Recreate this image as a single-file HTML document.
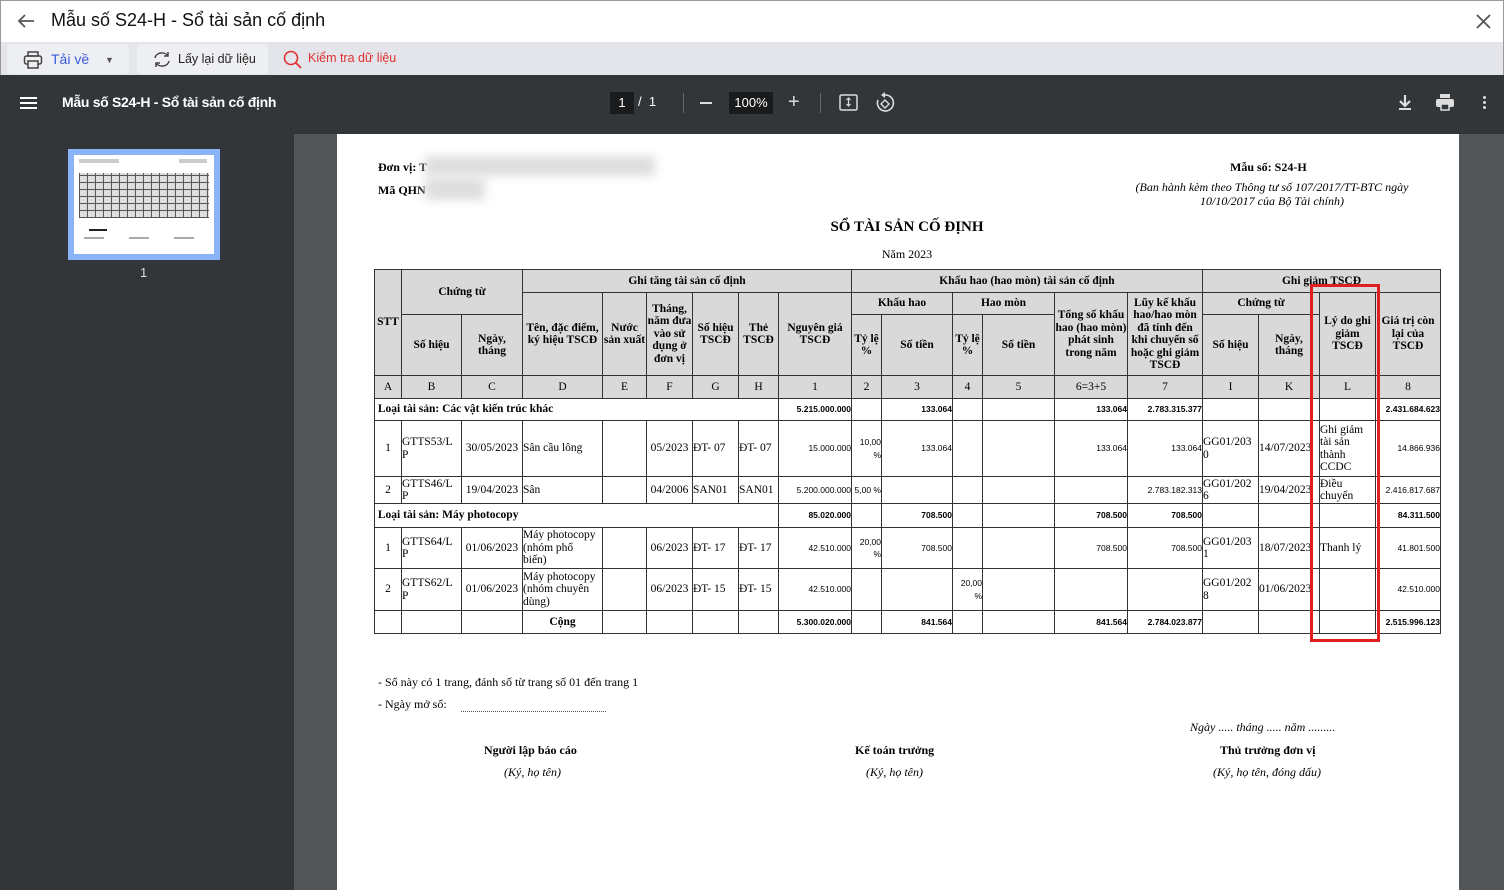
<!DOCTYPE html>
<html><head><meta charset="utf-8"><style>
*{margin:0;padding:0;box-sizing:border-box}
body{width:1504px;height:890px;overflow:hidden;font-family:"Liberation Sans",sans-serif;background:#525659;position:relative}
.hdr{position:absolute;left:0;top:0;width:1504px;height:42px;background:#fff;border:1px solid #999;border-bottom:none}
.hdr .t{position:absolute;left:50px;top:9px;font-size:18px;color:#111}
.tb{position:absolute;left:0;top:42px;width:1504px;height:33px;background:#e4e5ea;border-left:1px solid #999;border-right:1px solid #999}
.btn{position:absolute;top:2px;height:30px;background:#eeeff2;border-radius:3px;font-size:13px;line-height:30px}
.pv{position:absolute;left:0;top:75px;width:1504px;height:59px;background:#323639;color:#fff}
.side{position:absolute;left:0;top:134px;width:294px;height:756px;background:#323639}
.page{position:absolute;left:337px;top:134px;width:1122px;height:756px;background:#fff;font-family:"Liberation Serif",serif;color:#000}
table{position:absolute;left:37px;top:135px;border-collapse:collapse;table-layout:fixed;font-size:11.5px}
td{border:1px solid #333;text-align:center;vertical-align:middle;line-height:12.5px;padding:0;overflow:hidden;word-break:break-all}
.h td{background:#d9d9d9;font-weight:bold;word-break:normal}
.n{font-family:"Liberation Sans",sans-serif;font-size:8.5px;text-align:right;word-break:normal}
.b{font-weight:bold}
.l{text-align:left}
.dt td{border-top:1px dotted #555}
</style></head><body>
<div class="hdr">
<svg style="position:absolute;left:16px;top:12px" width="18" height="16" viewBox="0 0 18 16"><path d="M17 8H2M8 2L2 8l6 6" stroke="#555" stroke-width="1.8" fill="none"/></svg>
<div class="t">Mẫu số S24-H - Sổ tài sản cố định</div>
<svg style="position:absolute;left:1474px;top:12px" width="17" height="17"><path d="M2 2l13 13M15 2L2 15" stroke="#555" stroke-width="1.8"/></svg>
</div>
<div class="tb">
<div class="btn" style="left:6px;width:122px">
<svg style="position:absolute;left:16px;top:7px" width="20" height="18" viewBox="0 0 20 18"><rect x="5" y="1" width="10" height="4" fill="none" stroke="#444" stroke-width="1.5"/><rect x="1.5" y="5" width="17" height="8" rx="2" fill="none" stroke="#444" stroke-width="1.5"/><rect x="5" y="10" width="10" height="7" fill="#eee" stroke="#444" stroke-width="1.5"/></svg>
<span style="position:absolute;left:44px;color:#3b5bdb;font-size:14px">Tải về</span>
<span style="position:absolute;left:98px;top:1px;color:#555;font-size:9px">▼</span></div>
<div class="btn" style="left:136px;width:131px">
<svg style="position:absolute;left:15px;top:7px" width="20" height="17" viewBox="0 0 20 17"><path d="M3 7a7 6 0 0 1 13-2M17 10a7 6 0 0 1-13 2" stroke="#444" stroke-width="1.5" fill="none"/><path d="M16 1v4h-4M4 16v-4h4" stroke="#444" stroke-width="1.5" fill="none"/></svg>
<span style="position:absolute;left:41px;color:#222;font-size:12.5px">Lấy lại dữ liệu</span></div>
<svg style="position:absolute;left:282px;top:8px" width="19" height="19"><circle cx="8" cy="8" r="6.5" stroke="#e03131" stroke-width="1.6" fill="none"/><path d="M13 13l5 5" stroke="#e03131" stroke-width="1.8"/></svg>
<span style="position:absolute;left:307px;top:9px;color:#e03131;font-size:12.5px">Kiểm tra dữ liệu</span>
</div>
<div class="pv">
<div style="position:absolute;left:20px;top:22px;width:17px;height:2px;background:#fff;box-shadow:0 5px #fff,0 10px #fff"></div>
<div style="position:absolute;left:62px;top:19px;font-size:14px;font-weight:bold;letter-spacing:-0.3px">Mẫu số S24-H - Sổ tài sản cố định</div>
<div style="position:absolute;left:610px;top:17px;width:24px;height:22px;background:#191b1c;font-size:13px;text-align:center;line-height:22px">1</div>
<div style="position:absolute;left:638px;top:19px;font-size:13px">/ &nbsp;1</div>
<div style="position:absolute;left:683px;top:18px;width:1px;height:20px;background:#666"></div>
<div style="position:absolute;left:700px;top:27px;width:12px;height:2px;background:#ddd"></div>
<div style="position:absolute;left:729px;top:17px;width:44px;height:22px;background:#191b1c;font-size:13px;text-align:center;line-height:22px">100%</div>
<div style="position:absolute;left:788px;top:16px;font-size:20px;color:#ddd">+</div>
<div style="position:absolute;left:820px;top:18px;width:1px;height:20px;background:#666"></div>
<svg style="position:absolute;left:839px;top:19px" width="20" height="18"><rect x="1" y="1" width="17" height="15" rx="1.5" fill="none" stroke="#ddd" stroke-width="1.5"/><path d="M9.5 4v8M7.5 6l2-2 2 2M7.5 10l2 2 2-2" stroke="#ddd" stroke-width="1.2" fill="none"/></svg>
<svg style="position:absolute;left:875px;top:17px" width="20" height="22"><path d="M10 3a8 8 0 1 1-7 5" stroke="#ddd" stroke-width="1.6" fill="none"/><path d="M10 0v6l-4-3z" fill="#ddd"/><path d="M10 8l4 4-4 4-4-4z" fill="none" stroke="#ddd" stroke-width="1.4"/></svg>
<svg style="position:absolute;left:1397px;top:19px" width="16" height="18"><path d="M8 1v10M3 7l5 5 5-5" stroke="#ddd" stroke-width="2.2" fill="none"/><rect x="2" y="14" width="12" height="2" fill="#ddd"/></svg>
<svg style="position:absolute;left:1436px;top:19px" width="18" height="17"><rect x="4" y="0" width="10" height="4" fill="#ddd"/><rect x="0" y="5" width="18" height="8" rx="2" fill="#ddd"/><rect x="5" y="10" width="8" height="6" fill="#323639" stroke="#ddd" stroke-width="1.5"/></svg>
<div style="position:absolute;left:1483px;top:21px;width:3px;height:3px;background:#ddd;border-radius:2px;box-shadow:0 5px #ddd,0 10px #ddd"></div>
</div>
<div class="side">
<div style="position:absolute;left:68px;top:15px;width:152px;height:111px;background:#8ab4f8"></div>
<div style="position:absolute;left:74px;top:21px;width:140px;height:99px;background:#fff">
<div style="position:absolute;left:5px;top:4px;width:40px;height:4px;background:#ccc"></div>
<div style="position:absolute;left:105px;top:4px;width:28px;height:4px;background:#ccc"></div>
<div style="position:absolute;left:5px;top:18px;width:130px;height:45px;background:repeating-linear-gradient(0deg,#555 0 1px,transparent 1px 7px),repeating-linear-gradient(90deg,#555 0 1px,#ddd 1px 8px)"></div>
<div style="position:absolute;left:15px;top:74px;width:18px;height:2px;background:#222"></div>
<div style="position:absolute;left:10px;top:82px;width:120px;height:2px;background:repeating-linear-gradient(90deg,#aaa 0 20px,transparent 20px 45px)"></div>
</div>
<div style="position:absolute;left:140px;top:131px;color:#ddd;font-size:13px">1</div>
</div>
<div style="position:absolute;left:1459px;top:134px;width:45px;height:756px;background:#525659"></div>
<div class="page">
<div style="position:absolute;left:41px;top:26px;font-size:12px;font-weight:bold">Đơn vị: T</div>
<div style="position:absolute;left:41px;top:49px;font-size:12px;font-weight:bold">Mã QHN</div>
<div style="position:absolute;left:88px;top:22px;width:230px;height:20px;background:#ddd;filter:blur(5px)"></div>
<div style="position:absolute;left:88px;top:44px;width:60px;height:22px;background:#ddd;filter:blur(5px)"></div>
<div style="position:absolute;left:893px;top:26px;font-size:12px;font-weight:bold">Mẫu số: S24-H</div>
<div style="position:absolute;left:770px;top:46px;width:330px;text-align:center;font-size:12px;font-style:italic;line-height:14px">(Ban hành kèm theo Thông tư số 107/2017/TT-BTC ngày 10/10/2017 của Bộ Tài chính)</div>
<div style="position:absolute;left:0;top:85px;width:1140px;text-align:center;font-size:15px;font-weight:bold">SỔ TÀI SẢN CỐ ĐỊNH</div>
<div style="position:absolute;left:0;top:113px;width:1140px;text-align:center;font-size:12px">Năm 2023</div>
<table>
<colgroup><col style="width:27px"><col style="width:60px"><col style="width:61px"><col style="width:80px"><col style="width:44px"><col style="width:46px"><col style="width:46px"><col style="width:40px"><col style="width:73px"><col style="width:30px"><col style="width:71px"><col style="width:30px"><col style="width:72px"><col style="width:73px"><col style="width:75px"><col style="width:56px"><col style="width:61px"><col style="width:56px"><col style="width:65px"></colgroup>
<tr class="h" style="height:23px"><td rowspan="3">STT</td><td colspan="2" rowspan="2">Chứng từ</td><td colspan="6">Ghi tăng tài sản cố định</td><td colspan="6">Khấu hao (hao mòn) tài sản cố định</td><td colspan="4">Ghi giảm TSCĐ</td></tr>
<tr class="h" style="height:22px"><td rowspan="2">Tên, đặc điểm, ký hiệu TSCĐ</td><td rowspan="2">Nước sản xuất</td><td rowspan="2">Tháng, năm đưa vào sử dụng ở đơn vị</td><td rowspan="2">Số hiệu TSCĐ</td><td rowspan="2">Thẻ TSCĐ</td><td rowspan="2">Nguyên giá TSCĐ</td><td colspan="2">Khấu hao</td><td colspan="2">Hao mòn</td><td rowspan="2">Tổng số khấu hao (hao mòn) phát sinh trong năm</td><td rowspan="2">Lũy kế khấu hao/hao mòn đã tính đến khi chuyển số hoặc ghi giảm TSCĐ</td><td colspan="2">Chứng từ</td><td rowspan="2">Lý do ghi giảm TSCĐ</td><td rowspan="2">Giá trị còn lại của TSCĐ</td></tr>
<tr class="h" style="height:61px"><td>Số hiệu</td><td>Ngày,<br>tháng</td><td>Tỷ lệ %</td><td>Số tiền</td><td>Tỷ lệ %</td><td>Số tiền</td><td>Số hiệu</td><td>Ngày,<br>tháng</td></tr>
<tr class="h" style="height:23px"><td style="font-weight:normal">A</td><td style="font-weight:normal">B</td><td style="font-weight:normal">C</td><td style="font-weight:normal">D</td><td style="font-weight:normal">E</td><td style="font-weight:normal">F</td><td style="font-weight:normal">G</td><td style="font-weight:normal">H</td><td style="font-weight:normal">1</td><td style="font-weight:normal">2</td><td style="font-weight:normal">3</td><td style="font-weight:normal">4</td><td style="font-weight:normal">5</td><td style="font-weight:normal">6=3+5</td><td style="font-weight:normal">7</td><td style="font-weight:normal">I</td><td style="font-weight:normal">K</td><td style="font-weight:normal">L</td><td style="font-weight:normal">8</td></tr>
<tr style="height:22px"><td colspan="8" class="l b">&nbsp;Loại tài sản: Các vật kiến trúc khác</td><td class="n b">5.215.000.000</td><td></td><td class="n b">133.064</td><td></td><td></td><td class="n b">133.064</td><td class="n b">2.783.315.377</td><td></td><td></td><td></td><td class="n b">2.431.684.623</td></tr>
<tr style="height:56px"><td>1</td><td class="l">GTTS53/L<br>P</td><td>30/05/2023</td><td class="l">Sân cầu lông</td><td></td><td>05/2023</td><td class="l">ĐT- 07</td><td class="l">ĐT- 07</td><td class="n">15.000.000</td><td class="n">10,00<br>%</td><td class="n">133.064</td><td></td><td></td><td class="n">133.064</td><td class="n">133.064</td><td class="l">GG01/203<br>0</td><td class="l">14/07/2023</td><td class="l" style="word-break:normal">Ghi giảm tài sản thành CCDC</td><td class="n">14.866.936</td></tr>
<tr class="dt" style="height:27px"><td>2</td><td class="l">GTTS46/L<br>P</td><td>19/04/2023</td><td class="l">Sân</td><td></td><td>04/2006</td><td class="l">SAN01</td><td class="l">SAN01</td><td class="n">5.200.000.000</td><td class="n">5,00 %</td><td></td><td></td><td></td><td></td><td class="n">2.783.182.313</td><td class="l">GG01/202<br>6</td><td class="l">19/04/2023</td><td class="l">Điều<br>chuyển</td><td class="n">2.416.817.687</td></tr>
<tr style="height:24px"><td colspan="8" class="l b">&nbsp;Loại tài sản: Máy photocopy</td><td class="n b">85.020.000</td><td></td><td class="n b">708.500</td><td></td><td></td><td class="n b">708.500</td><td class="n b">708.500</td><td></td><td></td><td></td><td class="n b">84.311.500</td></tr>
<tr style="height:41px"><td>1</td><td class="l">GTTS64/L<br>P</td><td>01/06/2023</td><td class="l">Máy photocopy (nhóm phổ<br>biến)</td><td></td><td>06/2023</td><td class="l">ĐT- 17</td><td class="l">ĐT- 17</td><td class="n">42.510.000</td><td class="n">20,00<br>%</td><td class="n">708.500</td><td></td><td></td><td class="n">708.500</td><td class="n">708.500</td><td class="l">GG01/203<br>1</td><td class="l">18/07/2023</td><td class="l">Thanh lý</td><td class="n">41.801.500</td></tr>
<tr class="dt" style="height:42px"><td>2</td><td class="l">GTTS62/L<br>P</td><td>01/06/2023</td><td class="l">Máy photocopy (nhóm chuyên<br>dùng)</td><td></td><td>06/2023</td><td class="l">ĐT- 15</td><td class="l">ĐT- 15</td><td class="n">42.510.000</td><td></td><td></td><td class="n">20,00<br>%</td><td></td><td></td><td></td><td class="l">GG01/202<br>8</td><td class="l">01/06/2023</td><td></td><td class="n">42.510.000</td></tr>
<tr class="dt" style="height:23px"><td></td><td></td><td></td><td class="b">Cộng</td><td></td><td></td><td></td><td></td><td class="n b">5.300.020.000</td><td></td><td class="n b">841.564</td><td></td><td></td><td class="n b">841.564</td><td class="n b">2.784.023.877</td><td></td><td></td><td></td><td class="n b">2.515.996.123</td></tr>
</table>
<div style="position:absolute;left:973px;top:150px;width:70px;height:358px;border:3px solid #e02020"></div>
<div style="position:absolute;left:41px;top:541px;font-size:12px">- Sổ này có 1 trang, đánh số từ trang số 01 đến trang 1</div>
<div style="position:absolute;left:41px;top:563px;font-size:12px">- Ngày mở sổ:</div>
<div style="position:absolute;left:124px;top:577px;width:145px;border-top:1px dotted #555"></div>
<div style="position:absolute;left:853px;top:586px;font-size:12px;font-style:italic">Ngày ..... tháng ..... năm .........</div>
<div style="position:absolute;left:147px;top:609px;font-size:12px;font-weight:bold">Người lập báo cáo</div>
<div style="position:absolute;left:167px;top:631px;font-size:12px;font-style:italic">(Ký, họ tên)</div>
<div style="position:absolute;left:518px;top:609px;font-size:12px;font-weight:bold">Kế toán trưởng</div>
<div style="position:absolute;left:529px;top:631px;font-size:12px;font-style:italic">(Ký, họ tên)</div>
<div style="position:absolute;left:883px;top:609px;font-size:12px;font-weight:bold">Thủ trưởng đơn vị</div>
<div style="position:absolute;left:876px;top:631px;font-size:12px;font-style:italic">(Ký, họ tên, đóng dấu)</div>
</div>
</body></html>
